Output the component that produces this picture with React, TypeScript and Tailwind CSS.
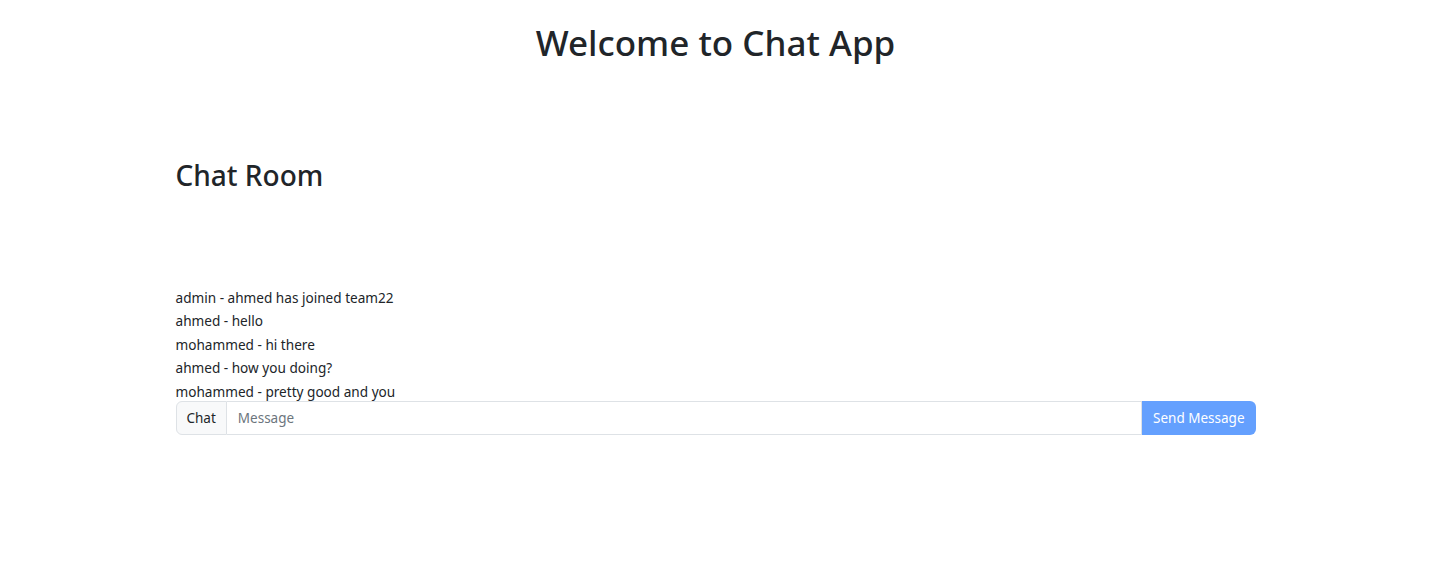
const messages = [
  { user: "admin", text: "ahmed has joined team22" },
  { user: "ahmed", text: "hello" },
  { user: "mohammed", text: "hi there" },
  { user: "ahmed", text: "how you doing?" },
  { user: "mohammed", text: "pretty good and you" },
];

export default function App() {
  return (
    <div className="min-h-[569px] bg-white pr-[17px] text-[#212529] font-['Noto_Sans',sans-serif]">
      <h1 className="pt-[22px] text-center text-[35px] font-medium leading-[42px]">
        Welcome to Chat App
      </h1>

      <div className="mx-auto mt-[95px] w-[1080px]">
        <h2 className="text-[28px] font-medium leading-[1.2]">Chat Room</h2>

        <div className="mt-[93px] text-[13.6px] leading-[23.5px]">
          {messages.map((m, i) => (
            <div key={i}>
              {m.user} - {m.text}
            </div>
          ))}
        </div>

        <div className="-mt-[2px] flex h-[34px] text-[13.5px]">
          <span className="flex items-center rounded-l-[6px] border border-[#dee2e6] bg-[#f8f9fa] px-[10px]">
            Chat
          </span>
          <input
            className="flex-1 border border-l-0 border-[#dee2e6] px-[11px] outline-none placeholder:text-[#6c757d]"
            placeholder="Message"
          />
          <button className="rounded-r-[6px] bg-[#64a0fe] px-[11px] text-white">
            Send Message
          </button>
        </div>
      </div>
    </div>
  );
}
